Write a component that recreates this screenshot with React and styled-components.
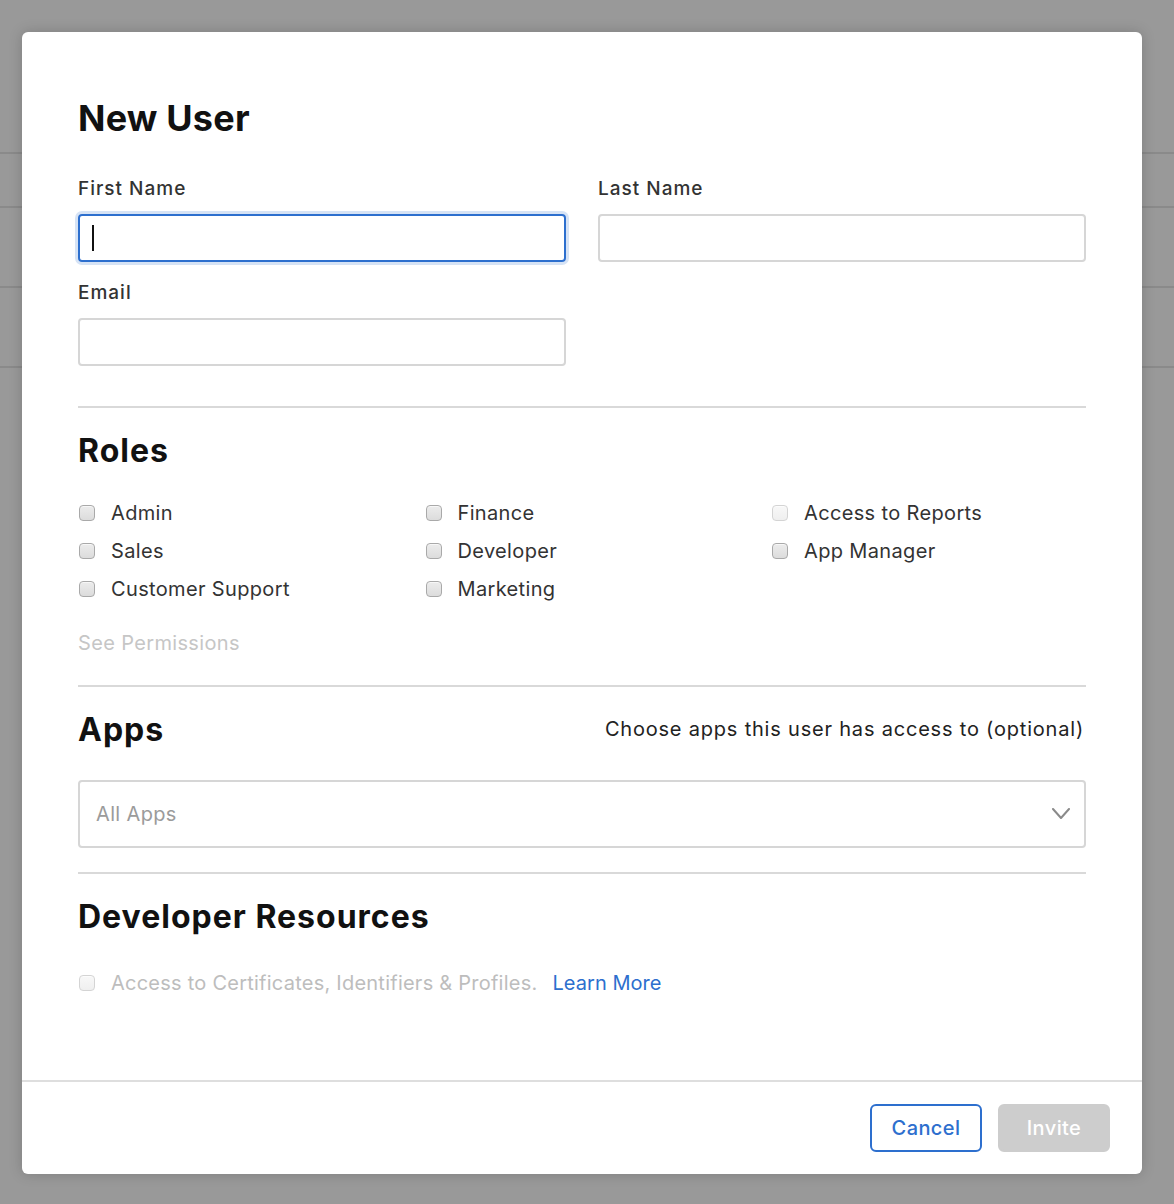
import React from "react";
import styled, { createGlobalStyle } from "styled-components";

const GlobalStyle = createGlobalStyle`
  html, body {
    margin: 0;
    padding: 0;
    background: #999999;
  }
  body {
    font-family: Inter, "Noto Sans", "Liberation Sans", sans-serif;
    -webkit-font-smoothing: antialiased;
  }
  * { box-sizing: border-box; }
`;

const Page = styled.div`
  position: relative;
  width: 1174px;
  height: 1204px;
  overflow: hidden;
  background: #999999;
`;

const BgRow = styled.div`
  height: ${props => props.h}px;
  border-bottom: 2px solid #8a8a8a;
`;

const Overlay = styled.div`
  position: absolute;
  inset: 0;
  padding: 32px 32px 30px 22px;
  display: flex;
`;

const Modal = styled.div`
  width: 1120px;
  height: 1142px;
  background: #fff;
  border-radius: 6px;
  box-shadow: 0 0 14px rgba(0, 0, 0, 0.18);
  display: flex;
  flex-direction: column;
`;

const Body = styled.div`
  flex: 1;
  padding: 65px 56px 0 56px;
`;

const Title = styled.h1`
  margin: 0;
  font-size: 36px;
  line-height: 43px;
  font-weight: 700;
  color: #111;
  letter-spacing: 0.2px;
`;

const FieldGrid = styled.div`
  display: grid;
  grid-template-columns: 488px 488px;
  column-gap: 32px;
  row-gap: 20px;
  margin-top: 38px;
`;

const Field = styled.div`
  display: flex;
  flex-direction: column;
  gap: 14px;
`;

const Label = styled.label`
  font-size: 19px;
  line-height: 22px;
  font-weight: 500;
  color: #333;
  letter-spacing: 1px;
`;

const Input = styled.div`
  height: 48px;
  border: 2px solid ${props => (props.focused ? "#2d6fce" : "#d6d6d6")};
  border-radius: 4px;
  box-shadow: ${props => (props.focused ? "0 0 0 3px #d6e3f5" : "none")};
  display: flex;
  align-items: center;
  padding-left: 12px;
`;

const Caret = styled.span`
  display: block;
  width: 2px;
  height: 26px;
  background: #111;
`;

const Divider = styled.hr`
  margin: ${props => props.top}px 0 0 0;
  border: 0;
  border-top: 2px solid #d9d9d9;
`;

const SectionHead = styled.div`
  display: flex;
  align-items: baseline;
  justify-content: space-between;
  margin-top: 25px;
`;

const Heading = styled.h2`
  margin: 0;
  font-size: 32px;
  line-height: 36px;
  font-weight: 700;
  color: #111;
  letter-spacing: 1px;
`;

const Hint = styled.span`
  font-size: 20px;
  color: #222;
  letter-spacing: 0.8px;
  padding-right: 2px;
  position: relative;
  top: -5px;
`;

const RoleGrid = styled.div`
  display: grid;
  grid-template-columns: repeat(3, 346.5px);
  row-gap: 14px;
  margin-top: 32px;
`;

const Check = styled.label`
  display: flex;
  align-items: center;
  gap: 16px;
  padding-left: 1px;
  font-size: 20px;
  line-height: 24px;
  color: ${props => (props.muted ? "#bdbdbd" : "#333")};
  letter-spacing: ${props => (props.muted ? "0.24px" : "0.35px")};
  white-space: nowrap;
`;

const Box = styled.span`
  width: 16px;
  height: 16px;
  flex: none;
  border-radius: 4px;
  border: 1px solid ${props => (props.disabled ? "#d4d4d4" : "#a9a9a9")};
  background: ${props =>
    props.disabled
      ? "linear-gradient(#f8f8f8, #efefef)"
      : "linear-gradient(#ececec, #dcdcdc)"};
  box-shadow: inset 0 1px 0 rgba(255, 255, 255, 0.6);
`;

const MutedLink = styled.div`
  margin-top: 30px;
  font-size: 20px;
  line-height: 24px;
  color: #c6c6c6;
  letter-spacing: 0.35px;
`;

const Select = styled.div`
  margin-top: 32px;
  height: 68px;
  border: 2px solid #d6d6d6;
  border-radius: 4px;
  display: flex;
  align-items: center;
  justify-content: space-between;
  padding: 0 13px 0 16px;
  font-size: 20px;
  color: #9b9b9b;
  letter-spacing: 0.35px;
`;

const ResourceRow = styled.div`
  display: flex;
  align-items: center;
  margin-top: 36px;
`;

const Learn = styled.a`
  margin-left: 15px;
  font-size: 20px;
  line-height: 24px;
  color: #2d6fce;
  letter-spacing: 0.05px;
  text-decoration: none;
`;

const Footer = styled.div`
  height: 94px;
  border-top: 2px solid #dedede;
  display: flex;
  align-items: center;
  justify-content: flex-end;
  gap: 16px;
  padding-right: 32px;
`;

const Button = styled.button`
  width: 112px;
  height: 48px;
  border-radius: 6px;
  font-family: inherit;
  font-size: 20px;
  font-weight: 500;
  letter-spacing: 0.4px;
  border: 2px solid ${props => (props.primary ? "#cdcdcd" : "#2d6fce")};
  background: ${props => (props.primary ? "#cdcdcd" : "#fff")};
  color: ${props => (props.primary ? "#fff" : "#2d6fce")};
`;

const roles = [
  ["Admin", "Finance", "Access to Reports"],
  ["Sales", "Developer", "App Manager"],
  ["Customer Support", "Marketing", null],
];

function App() {
  return (
    <Page>
      <GlobalStyle />
      <BgRow h={154} />
      <BgRow h={54} />
      <BgRow h={80} />
      <BgRow h={80} />
      <Overlay>
        <Modal>
          <Body>
            <Title>New User</Title>
            <FieldGrid>
              <Field>
                <Label>First Name</Label>
                <Input focused>
                  <Caret />
                </Input>
              </Field>
              <Field>
                <Label>Last Name</Label>
                <Input />
              </Field>
              <Field>
                <Label>Email</Label>
                <Input />
              </Field>
            </FieldGrid>

            <Divider top={40} />
            <SectionHead>
              <Heading>Roles</Heading>
            </SectionHead>
            <RoleGrid>
              {roles.flat().map((role, i) =>
                role ? (
                  <Check key={i}>
                    <Box disabled={role === "Access to Reports"} />
                    {role}
                  </Check>
                ) : (
                  <span key={i} />
                )
              )}
            </RoleGrid>
            <MutedLink>See Permissions</MutedLink>

            <Divider top={30} />
            <SectionHead>
              <Heading>Apps</Heading>
              <Hint>Choose apps this user has access to (optional)</Hint>
            </SectionHead>
            <Select>
              All Apps
              <svg width="20" height="12" viewBox="0 0 20 12" fill="none">
                <polyline
                  points="2,1 10,10 18,1"
                  stroke="#8a8a8a"
                  strokeWidth="2"
                  strokeLinecap="round"
                  strokeLinejoin="round"
                />
              </svg>
            </Select>

            <Divider top={24} />
            <SectionHead>
              <Heading>Developer Resources</Heading>
            </SectionHead>
            <ResourceRow>
              <Check muted>
                <Box disabled />
                Access to Certificates, Identifiers &amp; Profiles.
              </Check>
              <Learn href="#">Learn More</Learn>
            </ResourceRow>
          </Body>
          <Footer>
            <Button>Cancel</Button>
            <Button primary>Invite</Button>
          </Footer>
        </Modal>
      </Overlay>
    </Page>
  );
}

export default App;
